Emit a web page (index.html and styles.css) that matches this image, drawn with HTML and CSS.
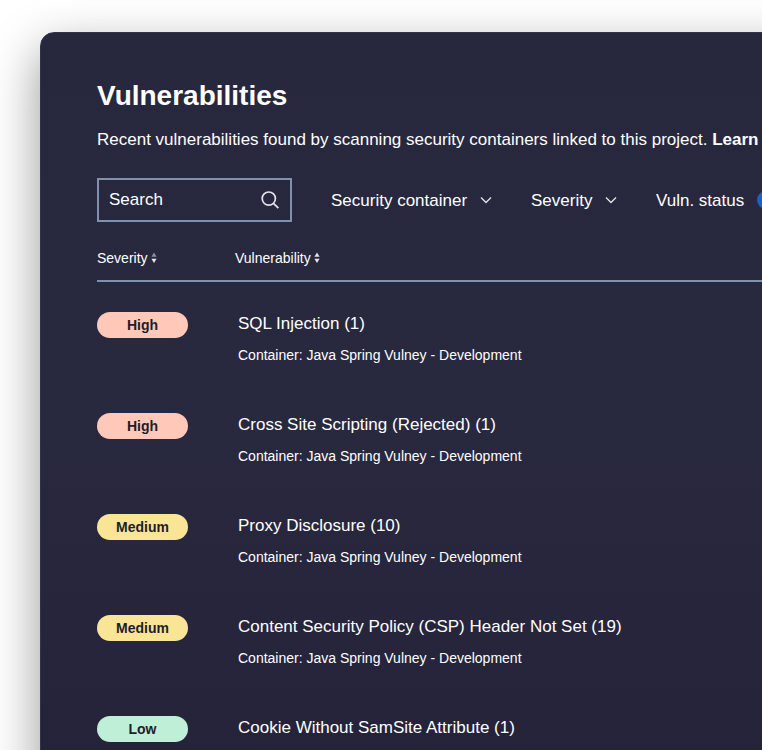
FILE: index.html
```html
<!DOCTYPE html>
<html lang="en">
<head>
    <meta charset="UTF-8">
    <meta name="viewport" content="width=device-width, initial-scale=1.0">
    <title>Vulnerabilities</title>
    <link rel="stylesheet" href="styles.css">
</head>
<body>
    <main class="panel">
        <h1>Vulnerabilities</h1>
        <p class="intro">Recent vulnerabilities found by scanning security containers linked to this project. <a href="#">Learn more</a></p>

        <!-- FILTERS -->
        <form class="filters">
            <div class="search">
                <input type="search" name="search" placeholder="Search" aria-label="Search">
                <svg class="search-icon" viewBox="0 0 20 20" aria-hidden="true">
                    <circle cx="8.8" cy="8.6" r="6.6"/>
                    <path d="M13.4 13.3L18.4 18.2"/>
                </svg>
            </div>
            <div class="filter">
                <select name="container" aria-label="Security container">
                    <option>Security container</option>
                </select>
                <svg class="chevron" viewBox="0 0 12 8" aria-hidden="true"><path d="M1 1.5L6 6.5L11 1.5"/></svg>
            </div>
            <div class="filter">
                <select name="severity" aria-label="Severity">
                    <option>Severity</option>
                </select>
                <svg class="chevron" viewBox="0 0 12 8" aria-hidden="true"><path d="M1 1.5L6 6.5L11 1.5"/></svg>
            </div>
            <div class="filter">
                <select name="status" aria-label="Vuln. status">
                    <option>Vuln. status</option>
                </select>
                <span class="count">2</span>
                <svg class="chevron" viewBox="0 0 12 8" aria-hidden="true"><path d="M1 1.5L6 6.5L11 1.5"/></svg>
            </div>
        </form>

        <!-- RESULTS -->
        <table class="results">
            <thead>
                <tr>
                    <th class="col-severity">
                        <button type="button" class="sort">Severity
                            <svg viewBox="0 0 6 12" aria-hidden="true"><path class="dim" d="M3 .6L5.6 4.8H.4z"/><path d="M3 11L.4 6.8H5.6z"/></svg>
                        </button>
                    </th>
                    <th>
                        <button type="button" class="sort">Vulnerability
                            <svg viewBox="0 0 6 12" aria-hidden="true"><path d="M3 .6L5.6 4.8H.4z"/><path d="M3 11L.4 6.8H5.6z"/></svg>
                        </button>
                    </th>
                </tr>
            </thead>
            <tbody>
                <tr>
                    <td><span class="badge high">High</span></td>
                    <td class="details">
                        <div class="name">SQL Injection (1)</div>
                        <div class="source">Container: Java Spring Vulney - Development</div>
                    </td>
                </tr>
                <tr>
                    <td><span class="badge high">High</span></td>
                    <td class="details">
                        <div class="name">Cross Site Scripting (Rejected) (1)</div>
                        <div class="source">Container: Java Spring Vulney - Development</div>
                    </td>
                </tr>
                <tr>
                    <td><span class="badge medium">Medium</span></td>
                    <td class="details">
                        <div class="name">Proxy Disclosure (10)</div>
                        <div class="source">Container: Java Spring Vulney - Development</div>
                    </td>
                </tr>
                <tr>
                    <td><span class="badge medium">Medium</span></td>
                    <td class="details">
                        <div class="name">Content Security Policy (CSP) Header Not Set (19)</div>
                        <div class="source">Container: Java Spring Vulney - Development</div>
                    </td>
                </tr>
                <tr>
                    <td><span class="badge low">Low</span></td>
                    <td class="details">
                        <div class="name">Cookie Without SamSite Attribute (1)</div>
                        <div class="source">Container: Java Spring Vulney - Development</div>
                    </td>
                </tr>
            </tbody>
        </table>
    </main>
</body>
</html>
```
FILE: styles.css
```css
* {
    box-sizing: border-box;
}
body {
    margin: 0;
    height: 100vh;
    overflow: hidden;
    background: #fff;
    color: #fff;
    font-family: "Liberation Sans", Arial, sans-serif;
    font-size: 17px;
}
/* the panel runs off the right and bottom edges of the page */
.panel {
    width: 120%;
    margin: 32px 0 0 40px;
    padding: 47px 56px;
    background: linear-gradient(#27283d, #28283e 50%, #242238);
    border: 1px solid #303449;
    border-radius: 14px;
    box-shadow: 0 18px 50px rgba(0, 0, 0, 0.42);
    white-space: nowrap;
}
h1 {
    margin: 0;
    font-size: 28px;
    line-height: 32px;
}
.intro {
    margin: 17px 0 27px;
    line-height: 22px;
}
.intro a {
    color: inherit;
    font-weight: bold;
    text-decoration: none;
}
.filters {
    display: flex;
    align-items: center;
    gap: 39px;
}
.search {
    display: flex;
    align-items: center;
    width: 195px;
    height: 44px;
    padding: 0 10px;
    border: 2px solid #7d93ad;
}
.search input {
    flex: 1;
    min-width: 0;
    padding: 0;
    border: none;
    outline: none;
    background: none;
    color: #fff;
    font: inherit;
}
.search input::placeholder {
    color: #fff;
    opacity: 1;
}
.search-icon {
    width: 20px;
    height: 20px;
    fill: none;
    stroke: #e4e5ec;
    stroke-width: 1.7;
}
.filter {
    display: flex;
    align-items: center;
    gap: 12px;
}
.filter select {
    appearance: none;
    padding: 0;
    border: none;
    background: none;
    color: #fff;
    font: inherit;
    cursor: pointer;
}
.chevron {
    width: 12px;
    height: 8px;
    fill: none;
    stroke: #e4e5ec;
    stroke-width: 1.3;
}
.count {
    width: 18px;
    border-radius: 9px;
    background: #1b5fd0;
    font-size: 12px;
    line-height: 18px;
    text-align: center;
}
.results {
    width: 100%;
    margin-top: 26px;
    border-collapse: separate;
    border-spacing: 0;
}
th, td {
    padding: 0;
    text-align: left;
    vertical-align: top;
}
th {
    padding-bottom: 12px;
    border-bottom: 2px solid #7d93ad;
}
.col-severity {
    width: 138px;
}
.sort {
    display: flex;
    align-items: center;
    gap: 3px;
    padding: 0;
    border: none;
    background: none;
    color: #fff;
    font: inherit;
    font-weight: normal;
    font-size: 14px;
    line-height: 20px;
    cursor: pointer;
}
.sort svg {
    width: 6px;
    height: 12px;
    fill: #e4e5ec;
}
.sort .dim {
    fill: #7d93ad;
}
td {
    height: 101px;
    padding-top: 30px;
}
.badge {
    display: block;
    width: 91px;
    border-radius: 13px;
    color: #1d1d2b;
    font-size: 14px;
    font-weight: bold;
    line-height: 26px;
    text-align: center;
}
.high {
    background: #ffc8b8;
}
.medium {
    background: #fae596;
}
.low {
    background: #bfefd6;
}
.details {
    padding-left: 3px;
}
.name {
    line-height: 24px;
}
.source {
    margin-top: 9px;
    font-size: 14px;
    line-height: 20px;
}
```
